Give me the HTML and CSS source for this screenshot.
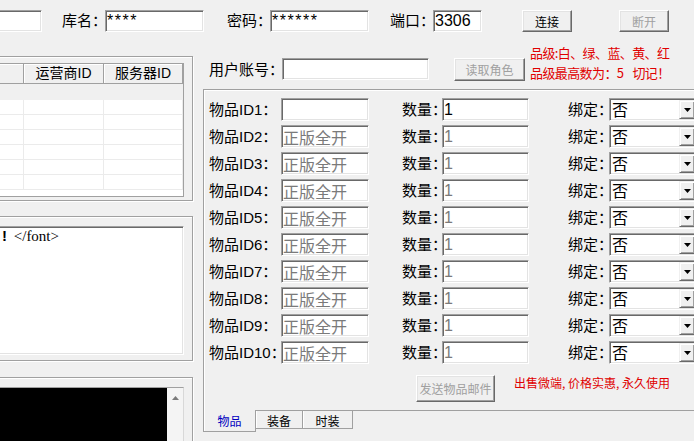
FILE: index.html
```html
<!DOCTYPE html>
<html lang="zh-CN">
<head>
<meta charset="utf-8">
<title>GM工具</title>
<link rel="stylesheet" href="styles.css">
</head>
<body>
<div class="app">
  <div class="topbar">
    <input class="edit e-host" type="text" value="">
    <span class="lbl l-db">库名：</span>
    <input class="edit e-db pw" type="text" value="****">
    <span class="lbl l-pw">密码：</span>
    <input class="edit e-pw pw" type="text" value="******">
    <span class="lbl l-port">端口：</span>
    <input class="edit e-port" type="text" value="3306">
    <button class="btn b-conn">连接</button>
    <button class="btn b-disc" disabled>断开</button>
  </div>
  <div class="main">
    <div class="left">
      <div class="grp g1">
        <div class="lv">
          <div class="lvh"><div class="hc c0"></div><div class="hc c1">运营商ID</div><div class="hc c2">服务器ID</div></div>
          <div class="lvr first"><div class="c0"></div><div class="c1"></div><div class="c2"></div></div>
          <div class="lvr"><div class="c0"></div><div class="c1"></div><div class="c2"></div></div>
          <div class="lvr"><div class="c0"></div><div class="c1"></div><div class="c2"></div></div>
          <div class="lvr"><div class="c0"></div><div class="c1"></div><div class="c2"></div></div>
          <div class="lvr"><div class="c0"></div><div class="c1"></div><div class="c2"></div></div>
          <div class="lvr"><div class="c0"></div><div class="c1"></div><div class="c2"></div></div>
          <div class="lvr"><div class="c0"></div><div class="c1"></div><div class="c2"></div></div>
        </div>
      </div>
      <div class="grp g2">
        <div class="memo"><span class="bang">!</span> &lt;/font&gt;</div>
      </div>
      <div class="grp g3">
        <div class="con">
          <div class="scr"></div>
          <div class="vsb"><svg class="up" width="7" height="4" viewBox="0 0 7 4"><polygon points="0,4 3.5,0 7,4" fill="#7a7a7a"/></svg></div>
        </div>
      </div>
    </div>
    <div class="right">
      <div class="userrow">
        <span class="lbl l-user">用户账号：</span>
        <input class="edit e-user" type="text" value="">
        <button class="btn b-read" disabled>读取角色</button>
        <div class="notes"><div>品级:白、绿、蓝、黄、红</div><div>品级最高数为：5<span class="gap"> </span>切记！</div></div>
      </div>
      <div class="tabctl">
        <div class="tabpage">
          <div class="rows">
            <div class="row"><span class="lbl rl1">物品ID1：</span><input class="edit rid" type="text" value=""><span class="lbl rl2">数量：</span><input class="edit rq" type="text" value="1"><span class="lbl rl3">绑定：</span><div class="combo"><span class="cv">否</span><span class="cb"><svg width="7" height="4" viewBox="0 0 7 4"><polygon points="0,0 7,0 3.5,4" fill="#000"/></svg></span></div></div>
            <div class="row"><span class="lbl rl1">物品ID2：</span><input class="edit rid dis" type="text" value="正版全开" readonly><span class="lbl rl2">数量：</span><input class="edit rq dis" type="text" value="1" readonly><span class="lbl rl3">绑定：</span><div class="combo"><span class="cv">否</span><span class="cb"><svg width="7" height="4" viewBox="0 0 7 4"><polygon points="0,0 7,0 3.5,4" fill="#000"/></svg></span></div></div>
            <div class="row"><span class="lbl rl1">物品ID3：</span><input class="edit rid dis" type="text" value="正版全开" readonly><span class="lbl rl2">数量：</span><input class="edit rq dis" type="text" value="1" readonly><span class="lbl rl3">绑定：</span><div class="combo"><span class="cv">否</span><span class="cb"><svg width="7" height="4" viewBox="0 0 7 4"><polygon points="0,0 7,0 3.5,4" fill="#000"/></svg></span></div></div>
            <div class="row"><span class="lbl rl1">物品ID4：</span><input class="edit rid dis" type="text" value="正版全开" readonly><span class="lbl rl2">数量：</span><input class="edit rq dis" type="text" value="1" readonly><span class="lbl rl3">绑定：</span><div class="combo"><span class="cv">否</span><span class="cb"><svg width="7" height="4" viewBox="0 0 7 4"><polygon points="0,0 7,0 3.5,4" fill="#000"/></svg></span></div></div>
            <div class="row"><span class="lbl rl1">物品ID5：</span><input class="edit rid dis" type="text" value="正版全开" readonly><span class="lbl rl2">数量：</span><input class="edit rq dis" type="text" value="1" readonly><span class="lbl rl3">绑定：</span><div class="combo"><span class="cv">否</span><span class="cb"><svg width="7" height="4" viewBox="0 0 7 4"><polygon points="0,0 7,0 3.5,4" fill="#000"/></svg></span></div></div>
            <div class="row"><span class="lbl rl1">物品ID6：</span><input class="edit rid dis" type="text" value="正版全开" readonly><span class="lbl rl2">数量：</span><input class="edit rq dis" type="text" value="1" readonly><span class="lbl rl3">绑定：</span><div class="combo"><span class="cv">否</span><span class="cb"><svg width="7" height="4" viewBox="0 0 7 4"><polygon points="0,0 7,0 3.5,4" fill="#000"/></svg></span></div></div>
            <div class="row"><span class="lbl rl1">物品ID7：</span><input class="edit rid dis" type="text" value="正版全开" readonly><span class="lbl rl2">数量：</span><input class="edit rq dis" type="text" value="1" readonly><span class="lbl rl3">绑定：</span><div class="combo"><span class="cv">否</span><span class="cb"><svg width="7" height="4" viewBox="0 0 7 4"><polygon points="0,0 7,0 3.5,4" fill="#000"/></svg></span></div></div>
            <div class="row"><span class="lbl rl1">物品ID8：</span><input class="edit rid dis" type="text" value="正版全开" readonly><span class="lbl rl2">数量：</span><input class="edit rq dis" type="text" value="1" readonly><span class="lbl rl3">绑定：</span><div class="combo"><span class="cv">否</span><span class="cb"><svg width="7" height="4" viewBox="0 0 7 4"><polygon points="0,0 7,0 3.5,4" fill="#000"/></svg></span></div></div>
            <div class="row"><span class="lbl rl1">物品ID9：</span><input class="edit rid dis" type="text" value="正版全开" readonly><span class="lbl rl2">数量：</span><input class="edit rq dis" type="text" value="1" readonly><span class="lbl rl3">绑定：</span><div class="combo"><span class="cv">否</span><span class="cb"><svg width="7" height="4" viewBox="0 0 7 4"><polygon points="0,0 7,0 3.5,4" fill="#000"/></svg></span></div></div>
            <div class="row"><span class="lbl rl1">物品ID10：</span><input class="edit rid dis" type="text" value="正版全开" readonly><span class="lbl rl2">数量：</span><input class="edit rq dis" type="text" value="1" readonly><span class="lbl rl3">绑定：</span><div class="combo"><span class="cv">否</span><span class="cb"><svg width="7" height="4" viewBox="0 0 7 4"><polygon points="0,0 7,0 3.5,4" fill="#000"/></svg></span></div></div>
          </div>
          <div class="sendrow">
            <button class="btn b-send" disabled>发送物品邮件</button>
            <span class="ad">出售微端, 价格实惠, 永久使用</span>
          </div>
        </div>
        <div class="tabs">
          <div class="tab sel">物品</div>
          <div class="tab">装备</div>
          <div class="tab t3">时装</div>
        </div>
      </div>
    </div>
  </div>
</div>
</body>
</html>
```
FILE: styles.css
```css
* { box-sizing: border-box; }
html, body { margin: 0; padding: 0; }
body {
  background: #f0f0f0;
  font-family: "Liberation Sans", "Noto Sans CJK SC", sans-serif;
  font-size: 15px;
  color: #000;
}
.app {
  width: 694px;
  height: 441px;
  overflow: hidden;
  background: #f0f0f0;
}

/* generic controls */
.lbl {
  font-size: 15px;
  line-height: 22px;
  white-space: nowrap;
  flex: none;
}
.edit {
  display: block;
  flex: none;
  height: 22px;
  margin: 0;
  padding: 0 1px;
  background: #fff;
  border: 1px solid;
  border-color: #a0a0a0 #fff #fff #a0a0a0;
  box-shadow: inset 1px 1px 0 #696969, inset -1px -1px 0 #e3e3e3;
  font-family: "Liberation Sans", "Noto Sans CJK SC", sans-serif;
  font-size: 16px;
  color: #000;
  outline: none;
  border-radius: 0;
}
.edit.pw { letter-spacing: 1.5px; }
.edit.dis { color: #7a7a7a; }
.btn {
  flex: none;
  margin: 0;
  padding: 0;
  background: #f0f0f0;
  border: 1px solid;
  border-color: #fff #696969 #696969 #fff;
  box-shadow: inset -1px -1px 0 #a0a0a0, inset 1px 1px 0 #e3e3e3;
  font-family: "Noto Sans CJK SC", sans-serif;
  font-size: 12px;
  color: #000;
  border-radius: 0;
}
.btn:disabled { color: #a0a0a0; }

/* top bar */
.topbar {
  display: flex;
  align-items: flex-start;
  height: 44px;
  padding-top: 10px;
}
.e-host { margin-left: -20px; width: 62px; }
.l-db { margin-left: 20px; width: 43px; }
.e-db { width: 99px; }
.l-pw { margin-left: 23px; width: 43px; }
.e-pw { width: 99px; }
.l-port { margin-left: 21px; width: 43px; }
.e-port { width: 49px; }
.b-conn { margin-left: 40px; width: 50px; height: 22px; }
.b-disc { margin-left: 47px; width: 50px; height: 22px; }

/* main */
.main {
  display: flex;
  align-items: flex-start;
}
.left {
  flex: none;
  width: 233px;
  margin-left: -40px;
}
.grp {
  border: 1px solid #a0a0a0;
  box-shadow: inset 1px 1px 0 #fff, 1px 1px 0 #fff;
  padding: 0 8px 0 9px;
}
.g1 { margin-top: 12px; height: 145px; padding-top: 6px; }
.g2 { margin-top: 15px; height: 145px; padding-top: 9px; }
.g3 { margin-top: 16px; height: 80px; padding-top: 9px; }

/* list view */
.lv {
  height: 134px;
  background: #fff;
  border: 1px solid #a0a0a0;
  overflow: hidden;
}
.lvh {
  display: flex;
  height: 20px;
}
.hc {
  height: 20px;
  background: #f0f0f0;
  border-right: 1px solid #a0a0a0;
  border-bottom: 1px solid #a0a0a0;
  box-shadow: inset 1px 1px 0 #fff;
  font-family: "Liberation Sans", "Noto Sans CJK SC", sans-serif;
  font-size: 14px;
  line-height: 19px;
  text-align: center;
  white-space: nowrap;
}
.c0 { width: 53px; flex: none; }
.c1 { width: 80px; flex: none; }
.c2 { width: 79px; flex: none; }
.lvr {
  display: flex;
  height: 15px;
  border-bottom: 1px solid #ebebeb;
}
.lvr > div { border-right: 1px solid #ebebeb; }
.lvr.first {
  height: 16px;
  background: #f0f0f0;
  border-bottom: 0;
}
.lvr.first > div { border-right: 0; }

/* memo */
.memo {
  height: 129px;
  background: #fff;
  border: 1px solid;
  border-color: #a0a0a0 #fff #fff #a0a0a0;
  box-shadow: inset 1px 1px 0 #696969, inset -1px -1px 0 #e3e3e3;
  padding: 1px 0 0 31px;
  font-family: "Liberation Serif", "Noto Sans CJK SC", serif;
  font-size: 15px;
  line-height: 16px;
  white-space: nowrap;
}
.bang {
  font-family: "Liberation Sans", sans-serif;
  font-weight: bold;
  margin-right: 3px;
}

/* console */
.con {
  display: flex;
  height: 70px;
  border-top: 1px solid #a0a0a0;
  border-right: 1px solid #d8d8d8;
}
.scr { flex: 1; background: #000; }
.vsb {
  flex: none;
  width: 16px;
  background: #f4f4f4;
  display: flex;
  justify-content: center;
  padding-top: 8px;
}
.up { display: block; }

/* right side */
.right {
  flex: none;
  width: 520px;
  margin-left: 10px;
}
.userrow {
  display: flex;
  align-items: flex-start;
  height: 45px;
}
.l-user {
  margin-top: 14px;
  padding-left: 6px;
  width: 79px;
  line-height: 23px;
}
.e-user { margin-top: 14px; width: 147px; }
.b-read { margin-top: 14px; margin-left: 25px; width: 71px; height: 23px; }
.notes {
  margin-left: 5px;
  margin-top: -1px;
  color: #e00000;
  font-family: "Noto Sans CJK SC", sans-serif;
  font-size: 13px;
  line-height: 20px;
  letter-spacing: -0.6px;
  white-space: nowrap;
}
.notes .gap {
  display: inline-block;
  width: 9px;
}

/* tab control */
.tabpage {
  height: 322px;
  border: 1px solid #a0a0a0;
  box-shadow: inset 1px 1px 0 #fff;
  padding: 8px 0 0 5px;
}
.rows {
  display: flex;
  flex-direction: column;
  gap: 4px;
}
.row {
  display: flex;
  align-items: center;
  height: 23px;
}
.row .lbl { line-height: 23px; }
.row .edit { height: 23px; }
.rl1 { width: 72px; }
.rid { width: 88px; }
.rl2 { margin-left: 33px; width: 40px; }
.rq { width: 87px; }
.rl3 { margin-left: 39px; width: 41px; }
.combo {
  flex: none;
  display: flex;
  width: 88px;
  height: 23px;
  padding: 1px;
  background: #fff;
  border: 1px solid;
  border-color: #a0a0a0 #fff #fff #a0a0a0;
  box-shadow: inset 1px 1px 0 #696969, inset -1px -1px 0 #e3e3e3;
  overflow: hidden;
}
.cv {
  flex: none;
  width: 68px;
  padding-left: 1px;
  font-family: "Noto Sans CJK SC", sans-serif;
  font-size: 16px;
  line-height: 19px;
}
.cb {
  flex: none;
  width: 16px;
  background: #f0f0f0;
  border: 1px solid;
  border-color: #f0f0f0 #696969 #696969 #f0f0f0;
  box-shadow: inset 1px 1px 0 #fff, inset -1px -1px 0 #a0a0a0;
  display: flex;
  align-items: center;
  justify-content: center;
}
.cb svg { display: block; }

.sendrow {
  display: flex;
  align-items: flex-start;
  margin-top: 11px;
}
.b-send { margin-left: 207px; width: 79px; height: 27px; }
.ad {
  margin-left: 19px;
  color: #e00000;
  font-family: "Noto Sans CJK SC", sans-serif;
  font-size: 12px;
  line-height: 16px;
  white-space: nowrap;
}

.tabs {
  display: flex;
  align-items: flex-start;
}
.tab {
  flex: none;
  width: 47px;
  height: 18px;
  border-right: 1px solid #a0a0a0;
  border-bottom: 1px solid #a0a0a0;
  box-shadow: inset 1px 0 0 #fff;
  font-family: "Noto Sans CJK SC", sans-serif;
  font-size: 12px;
  line-height: 20px;
  text-align: center;
  background: #f0f0f0;
}
.tab.sel {
  width: 53px;
  height: 22px;
  margin-top: -1px;
  border-left: 1px solid #a0a0a0;
  color: #0000c0;
  line-height: 22px;
}
.tab.t3 { width: 50px; }
```
